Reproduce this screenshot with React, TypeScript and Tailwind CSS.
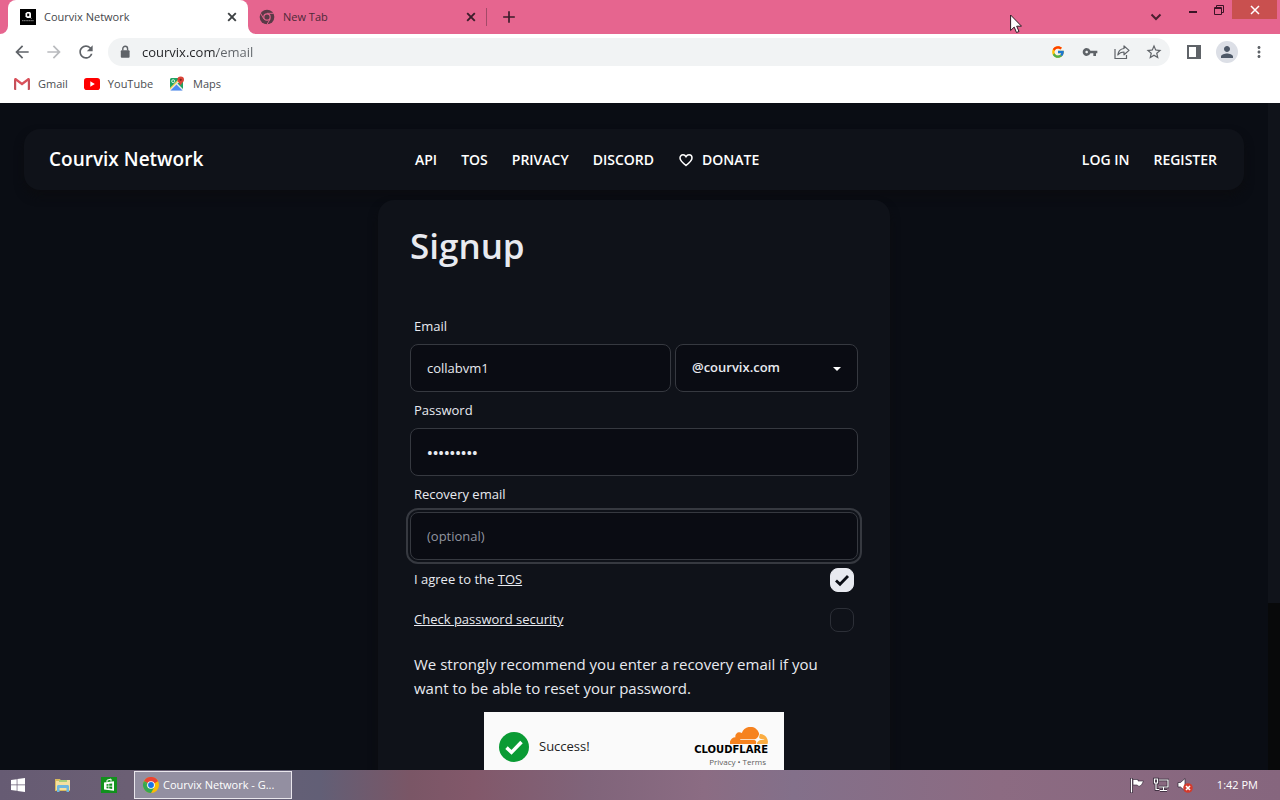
import { useState } from "react";
import type { ReactNode } from "react";
import { FcGoogle } from "react-icons/fc";
import {
  MdAdd,
  MdArrowBack,
  MdArrowForward,
  MdMoreVert,
  MdPerson,
  MdRefresh,
  MdStarBorder,
  MdVpnKey,
} from "react-icons/md";

function CourvixIcon() {
  return (
    <svg viewBox="0 0 16 16" className="size-4 shrink-0" aria-hidden="true">
      <rect width="16" height="16" fill="#000" />
      <path d="M5.5 4.5 7 3h3l1 1.2v3.3L9.5 9H7L5.5 7.5z" fill="#fff" />
      <path d="M7.2 4.6h2v2.6h-2z" fill="#000" />
      <path d="M9 7.5l2.4 1.8" stroke="#fff" strokeWidth="1" />
      <path d="M2 11.7h12" stroke="#aaa" strokeWidth="0.8" strokeDasharray="1.4 .3" />
    </svg>
  );
}

function ChromeIcon() {
  return (
    <svg viewBox="0 0 24 24" className="size-4 shrink-0" aria-hidden="true">
      <circle cx="12" cy="12" r="12" fill="#fbbc04" />
      <path d="M12 12 1.6 6A12 12 0 0 1 22.4 6z" fill="#ea4335" />
      <path d="M12 6h10.4L12 12z" fill="#ea4335" />
      <path d="M1.6 6A12 12 0 0 0 12 24l5.2-9L12 12 6.8 15z" fill="#34a853" />
      <path d="M1.6 6 6.8 15 12 12z" fill="#34a853" />
      <circle cx="12" cy="12" r="5.8" fill="#fff" />
      <circle cx="12" cy="12" r="4.4" fill="#1a73e8" />
    </svg>
  );
}

function MonoChromeIcon() {
  return (
    <svg viewBox="0 0 24 24" className="size-4 shrink-0" aria-hidden="true">
      <circle cx="12" cy="12" r="11" fill="#5a3a47" />
      <path d="M12 6.500h10M7.200 14.800 2.200 6.200M16.800 14.800 11.800 23.400" stroke="#e6658f" strokeWidth="1.400" />
      <circle cx="12" cy="12" r="5.600" fill="#e6658f" />
      <circle cx="12" cy="12" r="3.900" fill="#5a3a47" />
    </svg>
  );
}

function CloseIcon() {
  return (
    <svg viewBox="0 0 10 10" className="size-2.5" stroke="currentColor" strokeWidth="1.900" aria-hidden="true">
      <path d="M1.200 1.200l7.600 7.600M8.800 1.200 1.200 8.800" />
    </svg>
  );
}

function GmailIcon() {
  return (
    <svg viewBox="0 0 16 12" className="h-3 w-4 shrink-0" aria-hidden="true">
      <path d="M0 1.5h2.2V12H1a1 1 0 0 1-1-1z" fill="#c5505a" />
      <path d="M16 1.5h-2.2V12H15a1 1 0 0 0 1-1z" fill="#c5505a" />
      <path d="M0 1.6C0 .2 1.5-.4 2.6.4L8 4.6 13.4.4C14.500-.4 16 .2 16 1.600L8 7.400z" fill="#d9505a" />
    </svg>
  );
}

function YouTubeIcon() {
  return (
    <svg viewBox="0 0 16 12" className="h-3 w-4 shrink-0" aria-hidden="true">
      <rect width="16" height="12" rx="2.800" fill="#f00" />
      <path d="M6.300 3.300v5.400L10.800 6z" fill="#fff" />
    </svg>
  );
}

function MapsIcon() {
  return (
    <svg viewBox="0 0 16 16" className="size-4 shrink-0" aria-hidden="true">
      <rect x="1" y="2" width="13" height="13" rx="1.500" fill="#e8eaed" />
      <path d="M1 3.500A1.500 1.500 0 0 1 2.500 2H11L1 12.500z" fill="#1fa463" />
      <path d="M1.500 14.500 7.500 8.500l6 6z" fill="#4c8bf5" />
      <path d="M8.500 7.500 14 13V4z" fill="#1fa463" />
      <path d="M1 12 11 2h1.500L1 13.500z" fill="#ffd04b" />
      <circle cx="4.200" cy="5.200" r="1.500" fill="none" stroke="#fff" strokeWidth=".8" />
      <path d="M11.700.5a3.300 3.300 0 0 1 3.300 3.300c0 2.500-3 3.500-3.300 6.200-.3-2.700-3.300-3.700-3.300-6.200A3.300 3.300 0 0 1 11.700.5z" fill="#db4437" />
      <circle cx="11.700" cy="3.800" r="1.100" fill="#7b231e" />
    </svg>
  );
}

function LockIcon() {
  return (
    <svg viewBox="0 0 14 14" className="size-3.5 shrink-0" aria-hidden="true">
      <rect x="2.800" y="5.300" width="8.800" height="7.500" rx="1" fill="#5f6368" />
      <path d="M4.800 5.500V3.700a2.400 2.400 0 0 1 4.800 0v1.800" fill="none" stroke="#5f6368" strokeWidth="1.400" />
    </svg>
  );
}

function ShareIcon() {
  return (
    <svg viewBox="0 0 16 16" className="size-4" fill="none" stroke="#5f6368" strokeWidth="1.200" aria-hidden="true">
      <path d="M1 5v9.500h11.500V11" />
      <path d="M10 2v2.500C6.500 4.800 4.300 7 3.800 11c1.700-2.200 3.500-3 6.200-3v2.800l5-4.400z" strokeLinejoin="round" />
    </svg>
  );
}

function CloudflareCloud() {
  return (
    <svg viewBox="55.500 3.800 47.300 21.500" className="h-[17px] w-[38px]" aria-hidden="true">
      <path
        fill="#f6821f"
        d="M88.100,24c0.300-1,0.200-2-0.300-2.600c-0.500-0.600-1.200-1-2.100-1.100l-17.400-0.200c-0.100,0-0.200-0.100-0.300-0.100c-0.100-0.100-0.100-0.200,0-0.300c0.100-0.200,0.200-0.300,0.400-0.300l17.500-0.200c2.100-0.100,4.300-1.800,5.100-3.800l1-2.600c0-0.100,0.100-0.200,0-0.300c-1.100-5.100-5.700-8.900-11.100-8.900c-5,0-9.300,3.200-10.800,7.700c-1-0.700-2.200-1.100-3.600-1c-2.400,0.200-4.300,2.200-4.600,4.600c-0.100,0.600,0,1.200,0.100,1.800c-3.900,0.100-7.100,3.300-7.100,7.300c0,0.400,0,0.700,0.100,1.100c0,0.200,0.200,0.300,0.300,0.300h32.100c0.200,0,0.400-0.100,0.400-0.300L88.100,24z"
      />
      <path
        fill="#fbad41"
        d="M93.600,12.800c-0.200,0-0.300,0-0.500,0c-0.100,0-0.200,0.100-0.300,0.200l-0.700,2.400c-0.300,1-0.200,2,0.300,2.600c0.500,0.600,1.200,1,2.100,1.100l3.700,0.200c0.100,0,0.200,0.100,0.300,0.100c0.100,0.100,0.100,0.200,0,0.300c-0.100,0.200-0.200,0.300-0.400,0.300l-3.800,0.200c-2.100,0.100-4.300,1.800-5.100,3.800l-0.200,0.900c-0.100,0.100,0,0.300,0.200,0.300h13.200c0.200,0,0.300-0.100,0.300-0.300c0.200-0.800,0.400-1.700,0.400-2.600C102.800,17.100,98.700,13,93.600,12.800z"
      />
    </svg>
  );
}

function IconButton({ label, className = "", children }: { label: string; className?: string; children: ReactNode }) {
  return (
    <button type="button" aria-label={label} className={`flex shrink-0 items-center justify-center ${className}`}>
      {children}
    </button>
  );
}

function TabStrip() {
  return (
    <div className="flex h-[34px] shrink-0 bg-[#e6658f] pl-2 text-[11px] text-[#45474b]">
      <div className="relative flex w-60 items-center rounded-t-lg bg-white pr-[11px] pl-3">
        <svg viewBox="0 0 8 8" className="absolute bottom-0 -left-2 size-2" aria-hidden="true">
          <path d="M8 0v8H0a8 8 0 0 0 8-8z" fill="#fff" />
        </svg>
        <svg viewBox="0 0 8 8" className="absolute -right-2 bottom-0 size-2" aria-hidden="true">
          <path d="M0 0v8h8a8 8 0 0 1-8-8z" fill="#fff" />
        </svg>
        <CourvixIcon />
        <span className="ml-2 flex-1">Courvix Network</span>
        <IconButton label="Close Courvix Network" className="text-[#3c4043]">
          <CloseIcon />
        </IconButton>
      </div>
      <div className="flex w-[238px] items-center pr-2.5 pl-[11px] text-[#4d2938]">
        <MonoChromeIcon />
        <span className="ml-2 flex-1">New Tab</span>
        <IconButton label="Close New Tab" className="text-[#3b1d2a]">
          <CloseIcon />
        </IconButton>
      </div>
      <div className="my-2 w-px bg-[#a34a68]" />
      <IconButton label="New tab" className="ml-3">
        <MdAdd className="size-5 text-[#3b1d2a]" />
      </IconButton>
      <div className="ml-auto flex items-start">
        <IconButton label="Search tabs" className="mr-4 size-4 self-center">
          <svg viewBox="0 0 16 16" className="size-4" fill="none" stroke="#4a1f30" strokeWidth="2" aria-hidden="true">
            <path d="M3.500 5.500 8 10l4.500-4.500" />
          </svg>
        </IconButton>
        <IconButton label="Minimize" className="h-5 w-[26px]">
          <svg viewBox="0 0 12 12" className="size-3" aria-hidden="true">
            <path d="M2 8h8" stroke="#3b1426" strokeWidth="2" />
          </svg>
        </IconButton>
        <IconButton label="Restore" className="h-5 w-[26px]">
          <svg viewBox="0 0 12 12" className="size-3" fill="none" stroke="#3b1426" aria-hidden="true">
            <path d="M1.500 3.500h7v7h-7zM1.500 4.500h7M3.500 3V1.500h7v7H9" />
          </svg>
        </IconButton>
        <IconButton label="Close" className="mr-[3px] h-[19px] w-[45px] bg-[#c9504f]">
          <svg viewBox="0 0 10 10" className="size-2.5" stroke="#fff" strokeWidth="1.500" aria-hidden="true">
            <path d="M1 1l8 8M9 1 1 9" />
          </svg>
        </IconButton>
      </div>
    </div>
  );
}

function Toolbar() {
  return (
    <div className="flex h-9 shrink-0 items-center bg-white px-3 text-[#5f6368]">
      <div className="flex gap-3">
        <IconButton label="Back">
          <MdArrowBack className="size-5" />
        </IconButton>
        <IconButton label="Forward">
          <MdArrowForward className="size-5 text-[#b9bbbe]" />
        </IconButton>
        <IconButton label="Reload">
          <MdRefresh className="size-5" />
        </IconButton>
      </div>
      <div className="ml-3 flex h-7 flex-1 items-center rounded-full bg-[#f1f3f4] pr-2 pl-2.5">
        <LockIcon />
        <input
          aria-label="Address"
          defaultValue="courvix.com/email"
          className="ml-2.5 h-6 min-w-0 flex-1 bg-[linear-gradient(90deg,#202124_75px,#5f6368_75px)] bg-clip-text text-[13px] text-transparent outline-none"
        />
        <div className="flex gap-4">
          <IconButton label="Google" className="size-4">
            <FcGoogle className="size-3.5" />
          </IconButton>
          <IconButton label="Passwords" className="size-4">
            <MdVpnKey className="size-4" />
          </IconButton>
          <IconButton label="Share" className="size-4">
            <ShareIcon />
          </IconButton>
          <IconButton label="Bookmark" className="size-4">
            <MdStarBorder className="size-[18px] shrink-0" />
          </IconButton>
        </div>
      </div>
      <IconButton label="Side panel" className="ml-4">
        <svg viewBox="0 0 16 16" className="size-4" aria-hidden="true">
          <path fill="#5f6368" d="M1 1h14v14H1zM3 3v10h7V3z" fillRule="evenodd" />
        </svg>
      </IconButton>
      <IconButton label="Profile" className="ml-3.5 size-[22px] rounded-full bg-[#dcdfe6]">
        <MdPerson className="size-[18px] text-[#4d5867]" />
      </IconButton>
      <IconButton label="Menu" className="ml-3">
        <MdMoreVert className="size-[18px]" />
      </IconButton>
    </div>
  );
}

function Bookmarks() {
  const items = [
    { label: "Gmail", icon: <GmailIcon /> },
    { label: "YouTube", icon: <YouTubeIcon /> },
    { label: "Maps", icon: <MapsIcon /> },
  ];
  return (
    <div className="flex h-[33px] shrink-0 items-start gap-4 bg-white px-3.5 pt-1.5 text-[11px] leading-4 text-[#4a4d51]">
      {items.map((item) => (
        <a key={item.label} href="#" className="flex items-center gap-2">
          {item.icon}
          {item.label}
        </a>
      ))}
    </div>
  );
}

function SiteHeader() {
  return (
    <header className="flex h-[61px] items-center rounded-2xl bg-[#0f1219] pr-[27px] pl-[25px] text-sm font-semibold text-white shadow-[0_6px_10px_#0b0c10]">
      <a href="#" className="w-[366px] text-[19px]">
        Courvix Network
      </a>
      <nav className="flex flex-1 items-center gap-6">
        <a href="#">API</a>
        <a href="#">TOS</a>
        <a href="#">PRIVACY</a>
        <a href="#">DISCORD</a>
        <a href="#" className="flex items-center gap-2">
          <svg viewBox="0 0 16 16" className="size-4" fill="none" stroke="#fff" strokeWidth="1.500" aria-hidden="true">
            <path d="M8 13.500C4.500 10.700 2 8.600 2 6c0-1.800 1.300-3.200 3-3.200 1.300 0 2.300.7 3 1.900.7-1.200 1.700-1.900 3-1.900 1.700 0 3 1.400 3 3.200 0 2.600-2.500 4.700-6 7.500z" />
          </svg>
          DONATE
        </a>
      </nav>
      <nav className="flex gap-6">
        <a href="#">LOG IN</a>
        <a href="#">REGISTER</a>
      </nav>
    </header>
  );
}

function Tick({ className }: { className: string }) {
  return (
    <svg viewBox="0 0 16 16" className={className} fill="none" stroke="currentColor" aria-hidden="true">
      <path d="M2 8.500 6 12.300 14 4" strokeWidth="2.800" />
    </svg>
  );
}

function CheckRow({ id, defaultChecked = false, children }: { id: string; defaultChecked?: boolean; children: ReactNode }) {
  const [checked, setChecked] = useState(defaultChecked);
  return (
    <div className="flex h-10 items-center justify-between px-1">
      <label htmlFor={id}>{children}</label>
      <div className="relative size-6">
        <input
          id={id}
          type="checkbox"
          checked={checked}
          onChange={(e) => setChecked(e.target.checked)}
          className="block size-6 appearance-none rounded-lg border border-[#2c2f37] checked:border-[#e8eaf0] checked:bg-[#e8eaf0]"
        />
        {checked && <Tick className="pointer-events-none absolute inset-1 size-4 text-[#0b0e15]" />}
      </div>
    </div>
  );
}

const field = "h-12 w-full rounded-lg border border-[#363940] bg-[#0a0c13] px-4 text-[#e8eaf0] placeholder:text-[#9296a0]";

function SignupForm() {
  return (
    <form className="mx-auto mt-2.5 w-full max-w-lg rounded-2xl bg-[#0f1219] px-8 pt-[26px] pb-8 text-[13px] text-[#e8eaf0] shadow-[0_6px_10px_#0b0c10]">
      <h1 className="mb-[42px] text-[35px] leading-10 font-semibold">Signup</h1>
      <label htmlFor="email" className="block px-1 leading-9">
        Email
      </label>
      <div className="flex gap-1">
        <div className="min-w-0 flex-1">
          <input id="email" defaultValue="collabvm1" className={field} />
        </div>
        <div className="relative w-[183px]">
          <select aria-label="Domain" className={`${field} appearance-none font-semibold`}>
            <option>@courvix.com</option>
          </select>
          <svg viewBox="0 0 8 4" className="pointer-events-none absolute top-[23px] right-[17px] h-1 w-2" aria-hidden="true">
            <path d="M0 0h8L4 4z" fill="#fff" />
          </svg>
        </div>
      </div>
      <label htmlFor="password" className="block px-1 leading-9">
        Password
      </label>
      <input id="password" type="password" defaultValue="collabvm1" className={`${field} text-[15px] font-semibold`} />
      <label htmlFor="recovery" className="block px-1 leading-9">
        Recovery email
      </label>
      <input
        id="recovery"
        placeholder="(optional)"
        className={`${field} outline-2 outline-offset-2 outline-[#363940]`}
      />
      <CheckRow id="tos" defaultChecked>
        I agree to the{" "}
        <a href="#" className="underline">
          TOS
        </a>
      </CheckRow>
      <CheckRow id="security">
        <span className="underline">Check password security</span>
      </CheckRow>
      <p className="mt-3 px-1 text-[15px] leading-6">
        We strongly recommend you enter a recovery email if you want to be able to reset your password.
      </p>
      <div className="mx-auto mt-3 flex h-[70px] w-[300px] items-center bg-[#fafafa] pr-4 pl-[15px] text-[#232323]">
        <span className="flex size-[30px] items-center justify-center rounded-full bg-[#0a9b34] text-white">
          <Tick className="size-5" />
        </span>
        <span className="ml-2.5 flex-1">Success!</span>
        <div className="flex flex-col items-end">
          <CloudflareCloud />
          <span className="font-['DejaVu_Sans',sans-serif] text-[10px] leading-3 font-bold text-black">CLOUDFLARE</span>
          <span className="flex gap-0.5 pr-0.5 text-[8px] leading-3 text-[#5c5c5c]">
            <a href="#">Privacy</a>•<a href="#">Terms</a>
          </span>
        </div>
      </div>
    </form>
  );
}

function Taskbar() {
  return (
    <footer className="flex h-[30px] shrink-0 items-center bg-[linear-gradient(90deg,#665b73_0%,#6b5f74_10%,#625f76_25%,#7a5666_32%,#82586a_37%,#80647a_46%,#8b6c83_55%,#83708a_62%,#8c6b82_78%,#86667e_100%)] text-[11px] text-white">
      <IconButton label="Start" className="ml-[11px]">
        <svg viewBox="0 0 14 14" className="size-3.5" fill="#fff" aria-hidden="true">
          <path d="M0 2l5.700-.8v5.400H0zM6.400 1.100 14 0v6.600H6.400zM0 7.300h5.700v5.400L0 12zM6.400 7.300H14V14l-7.600-1.100z" />
        </svg>
      </IconButton>
      <IconButton label="File Explorer" className="ml-[29px]">
        <svg viewBox="0 0 18 16" className="h-4 w-[18px]" aria-hidden="true">
          <path d="M1 2h5l1 1.500h9V14H1z" fill="#d9b95d" />
          <path d="M2 4h5l1-1h8v10H2z" fill="#f4e0a0" />
          <path d="M5 3h8v2H5z" fill="#a8cf7b" />
          <path d="M3 15V9.500C3 8.600 3.600 8 4.500 8h9c.9 0 1.500.6 1.500 1.500V15h-2.500v-4h-7v4z" fill="#6db7e0" />
        </svg>
      </IconButton>
      <IconButton label="Store" className="ml-[29px]">
        <svg viewBox="0 0 16 16" className="size-4" aria-hidden="true">
          <rect width="16" height="16" fill="#12911d" />
          <path d="M3 5.500 13 4.200v9.600L3 12.500z" fill="#fff" />
          <path d="M6 5.200V3.200L10 2v2.500" fill="none" stroke="#fff" />
          <path d="M5.500 7.200l2-.3v1.900h-2zM8.200 6.800l3-.4v2.400h-3zM5.500 9.500h2v1.900l-2-.2zM8.200 9.500h3v2.400l-3-.4z" fill="#12911d" />
        </svg>
      </IconButton>
      <button
        type="button"
        className="ml-[17px] flex h-7 w-[158px] items-center gap-1 border border-[#e9e6ec] bg-[#938fa1] px-2 text-left whitespace-nowrap"
      >
        <ChromeIcon />
        Courvix Network - G...
      </button>
      <div className="ml-auto flex items-center gap-2 pr-[22px]">
        <svg viewBox="0 0 16 16" className="size-4" aria-hidden="true">
          <path d="M2.500 1v15" stroke="#2c2030" strokeWidth="2.500" />
          <path d="M4 2.500h5v1.500h5.500L12.500 8 10 9.500 8 8H4z" fill="#fff" stroke="#2c2030" strokeWidth=".6" />
          <path d="M2.500 1.500v14" stroke="#fff" strokeWidth="1.200" />
        </svg>
        <svg viewBox="0 0 16 16" className="size-4" fill="none" aria-hidden="true">
          <path d="M6 3h9v7H6M10.500 10v3M7 13.500h7M1.500 2h3v4h-3zM3 6v6.500h3" stroke="#2c2030" strokeWidth="2.600" />
          <path d="M6 3h9v7H6M10.500 10v3M7 13.500h7M1.500 2h3v4h-3zM3 6v6.500h3" stroke="#fff" strokeWidth="1.200" />
        </svg>
        <svg viewBox="0 0 16 16" className="size-4" aria-hidden="true">
          <path d="M1 5.500h2.500L8 1.500v12.500L3.500 10H1z" fill="#fff" stroke="#2c2030" strokeWidth=".7" />
          <circle cx="11" cy="11" r="4.800" fill="#d43a2c" />
          <path d="M9 9l4 4M13 9l-4 4" stroke="#fff" strokeWidth="1.600" />
        </svg>
        <time className="ml-4">1:42 PM</time>
      </div>
    </footer>
  );
}

export default function App() {
  return (
    <div className="relative flex h-screen flex-col overflow-hidden bg-[#0a0d14] font-['Open_Sans','Noto_Sans',sans-serif]">
      <TabStrip />
      <Toolbar />
      <Bookmarks />
      <div className="flex min-h-0 flex-1">
        <main className="min-w-0 flex-1 overflow-hidden px-6 pt-[26px]">
          <SiteHeader />
          <SignupForm />
        </main>
        <div className="w-3 bg-[#08090a]">
          <div className="h-3/4 bg-[#10131a]" />
        </div>
      </div>
      <Taskbar />
      <svg viewBox="0 0 12 20" className="pointer-events-none absolute top-3.5 left-[1010px] h-5 w-3" aria-hidden="true">
        <path
          d="M.6 1v15.500l3.600-3.400 2.300 5.400 2.500-1-2.300-5.300h4.800z"
          fill="#fff"
          stroke="#2a1a22"
          strokeWidth="1"
        />
      </svg>
    </div>
  );
}
